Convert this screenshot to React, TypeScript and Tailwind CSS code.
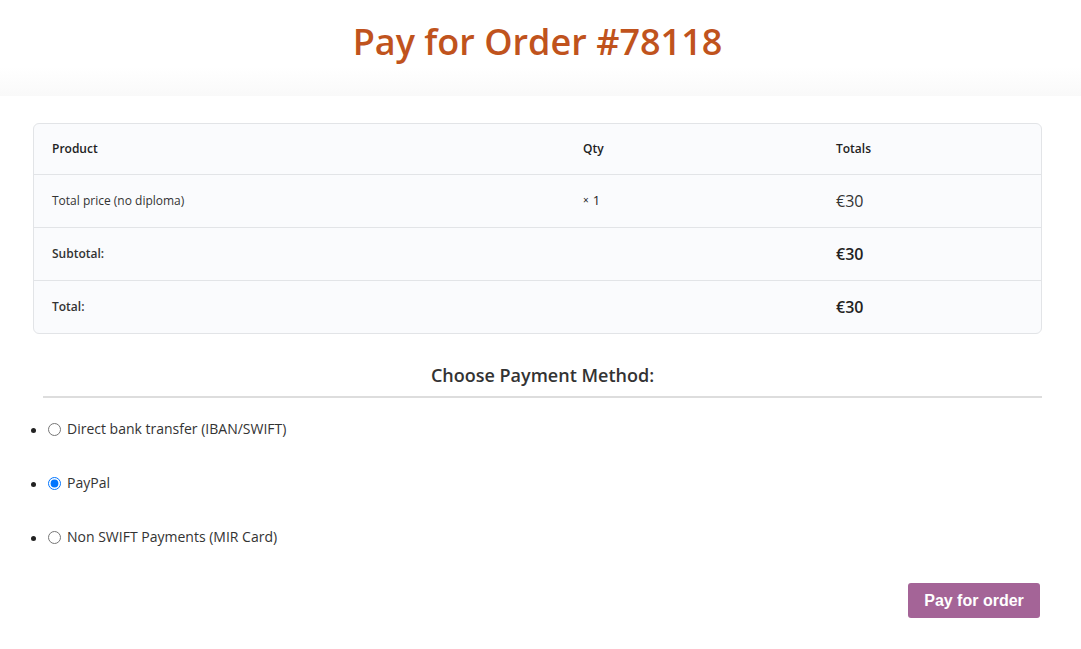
import { Fragment } from "react";

const rows = [
  { label: "Total price (no diploma)", qty: "1", total: "€30", strong: false },
  { label: "Subtotal:", qty: "", total: "€30", strong: true },
  { label: "Total:", qty: "", total: "€30", strong: true },
];

const methods = [
  { id: "bacs", label: "Direct bank transfer (IBAN/SWIFT)", checked: false },
  { id: "paypal", label: "PayPal", checked: true },
  { id: "mir", label: "Non SWIFT Payments (MIR Card)", checked: false },
];

export default function App() {
  return (
    <div className="min-h-[649px] bg-white font-['Open_Sans',sans-serif] text-[#333]">
      <header className="h-[96px] bg-gradient-to-b from-white from-70% to-[#f9f9f9] pr-[6px] pt-[18px]">
        <h1 className="text-center text-[36px] font-semibold leading-[48px] text-[#c0531d]">
          Pay for Order #78118
        </h1>
      </header>

      <main className="pl-[33px] pr-[39px] pt-[27px]">
        <div className="grid grid-cols-[531px_253px_1fr] rounded-md border border-[#e2e4e7] bg-[#fafbfd]">
          <div className="flex h-[50px] items-center pl-[18px] text-xs font-semibold text-[#222]">Product</div>
          <div className="flex h-[50px] items-center pl-[18px] text-xs font-semibold text-[#222]">Qty</div>
          <div className="flex h-[50px] items-center pl-[18px] text-xs font-semibold text-[#222]">Totals</div>
          {rows.map((r) => (
            <Fragment key={r.label}>
              <div
                className={`flex h-[53px] items-center border-t border-[#e2e4e7] pl-[18px] text-xs text-[#333] ${
                  r.strong ? "font-semibold text-[#222]" : ""
                }`}
              >
                {r.label}
              </div>
              <div className="flex h-[53px] items-center border-t border-[#e2e4e7] pl-[18px] text-xs text-[#222]">
                {r.qty && (
                  <>
                    <span className="mr-1 text-[10px]">×</span>
                    <span className="text-[13px] font-medium">{r.qty}</span>
                  </>
                )}
              </div>
              <div
                className={`flex h-[53px] items-center border-t border-[#e2e4e7] pl-[18px] text-base ${
                  r.strong ? "font-semibold text-[#222]" : "text-[#333]"
                }`}
              >
                {r.total}
              </div>
            </Fragment>
          ))}
        </div>

        <div className="ml-[10px] mt-[29px] border-b-2 border-[#dddddd] pb-[9px] text-center text-lg font-semibold leading-[24px] text-[#333]">
          Choose Payment Method:
        </div>
      </main>

      <ul className="mt-[21px] list-disc pl-[48px] text-sm text-[#333]">
        {methods.map((m) => (
          <li key={m.id} className="mb-[32px] h-[22px] marker:text-[#222]">
            <label className="flex items-center gap-[6px]">
              <input
                type="radio"
                name="payment"
                defaultChecked={m.checked}
                className="m-0 h-[13px] w-[13px] accent-[#0075ff]"
              />
              <span>{m.label}</span>
            </label>
          </li>
        ))}
      </ul>

      <div className="flex justify-end pr-[41px] pt-[2px]">
        <button className="h-[35px] w-[132px] rounded-[3px] bg-[#a46497] font-['Liberation_Sans',Arial,sans-serif] text-base font-bold text-white">
          Pay for order
        </button>
      </div>
    </div>
  );
}
